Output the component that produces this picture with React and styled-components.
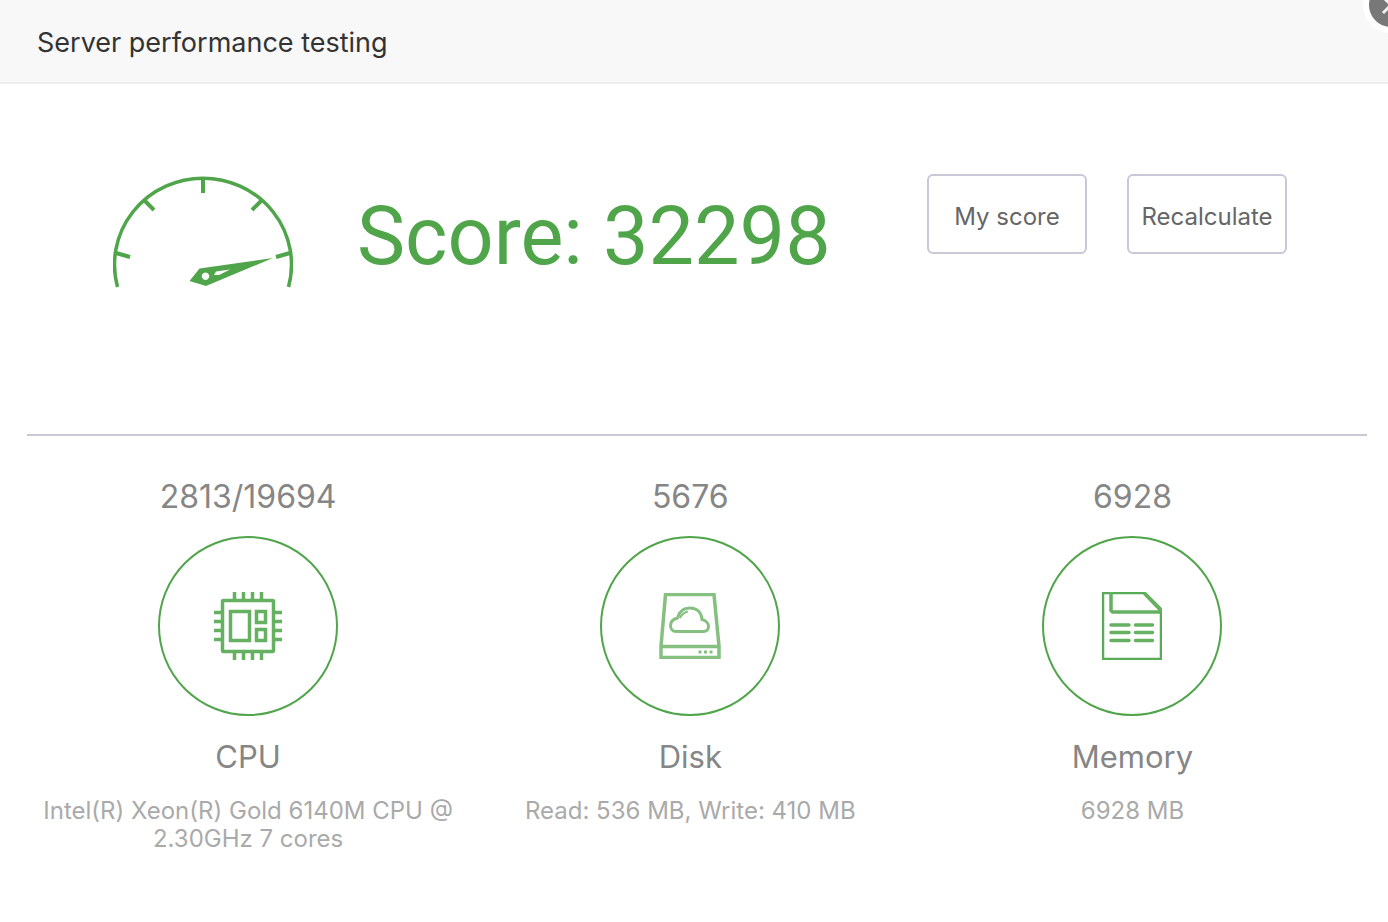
import React from 'react';
import styled, { createGlobalStyle } from 'styled-components';

const GREEN = '#50a54b';
const LINE = '#cac7d9';

const GlobalStyle = createGlobalStyle`
  *, *::before, *::after { box-sizing: border-box; }
  body {
    margin: 0;
    background: #fff;
    font-family: Inter, "Liberation Sans", sans-serif;
  }
`;

const Dialog = styled.section`
  position: relative;
  overflow: hidden;
  min-height: 100vh;
  background: #fff;
`;

const Header = styled.header`
  height: 84px;
  padding: 3px 37px 0;
  display: flex;
  align-items: center;
  background: #f8f8f8;
  border-bottom: 2px solid #eee;
`;

const Title = styled.h1`
  margin: 0;
  font-size: 27px;
  line-height: 36px;
  font-weight: 400;
  color: #333;
`;

const CloseButton = styled.button`
  position: absolute;
  top: -23px;
  right: -31px;
  width: 56px;
  height: 56px;
  padding: 0;
  border: 6px solid #fff;
  border-radius: 50%;
  background: #787878;
  display: grid;
  place-items: center;
  cursor: pointer;
`;

const Summary = styled.div`
  display: flex;
  align-items: flex-start;
  margin: 0 21px 0 27px;
  height: 352px;
  padding: 90px 80px 0 86px;
  border-bottom: 2px solid ${LINE};
`;

const Gauge = styled.svg`
  flex: none;
  width: 180px;
  height: 114px;
`;

const Score = styled.p`
  flex: 1;
  margin: 15px 0 0 64px;
  font-family: Roboto, "Liberation Sans", sans-serif;
  font-size: 81px;
  line-height: 96px;
  color: ${GREEN};
  white-space: nowrap;
`;

const Actions = styled.div`
  display: flex;
  gap: 40px;
`;

const ActionButton = styled.button`
  width: 160px;
  height: 80px;
  padding: 6px 0 0;
  border: 2px solid ${LINE};
  border-radius: 6px;
  background: #fff;
  color: #666;
  font-family: inherit;
  font-size: 24px;
  line-height: 28px;
  cursor: pointer;
`;

const Results = styled.div`
  display: flex;
  margin: 0 21px 0 27px;
  padding-top: 41px;
`;

const Result = styled.article`
  width: 33%;
  padding: 0 12px;
  display: flex;
  flex-direction: column;
  align-items: center;
  text-align: center;
`;

const Value = styled.p`
  margin: 0;
  font-size: 32px;
  line-height: 40px;
  color: #868686;
`;

const IconRing = styled.div`
  width: 180px;
  height: 180px;
  margin: 19px 0 21px;
  border: 2px solid ${GREEN};
  border-radius: 50%;
  display: grid;
  place-items: center;
`;

const Name = styled.h2`
  margin: 0 0 20px;
  font-size: 31px;
  line-height: 40px;
  font-weight: 400;
  color: #868686;
`;

const Detail = styled.p`
  margin: 0;
  font-size: 24px;
  line-height: 28px;
  color: #aaa;
`;

const CpuIcon = () => (
  <svg width="68" height="68" viewBox="0 0 68 68" fill="none" stroke="#66b161" strokeWidth="3.5" aria-hidden="true">
    <rect x="8.5" y="8.5" width="51" height="51" rx="1" />
    <rect x="16.5" y="19.5" width="19" height="29" />
    <rect x="42.5" y="19.5" width="9" height="11" />
    <rect x="42.5" y="37.5" width="9" height="11" />
    <path d="M20.5 0v8M29.5 0v8M38.5 0v8M47.5 0v8M20.5 60v8M29.5 60v8M38.5 60v8M47.5 60v8M0 20.5h8M0 29.5h8M0 38.5h8M0 47.5h8M60 20.5h8M60 29.5h8M60 38.5h8M60 47.5h8" />
  </svg>
);

const DiskIcon = () => (
  <svg width="62" height="66" viewBox="0 0 62 66" fill="none" stroke="#85c081" strokeWidth="3.5" aria-hidden="true">
    <path d="M6.5 1.5h48.500L60 53v11.500h-58V53z" />
    <path d="M2 53.500h58" />
    <path d="M17 38.500c-3.500 0-5.500-2.500-5.500-6 0-4 3-6.500 7-7.500 1.500-6 6-10 12.500-10 7 0 11.500 4.500 12 11.500 4 1 6.500 4 6.500 7 0 3-2 5-5 5z" strokeWidth="3" />
    <path d="M21 25c1.500-3.500 4-5.500 8-6.500" strokeWidth="2" />
    <path d="M39.500 59h3M45 59h3M50.500 59h3" strokeWidth="3" />
  </svg>
);

const MemoryIcon = () => (
  <svg width="60" height="68" viewBox="0 0 60 68" fill="none" stroke="#5aab55" strokeWidth="2.5" aria-hidden="true">
    <path d="M1 1h42L59 17v50H1z" />
    <g stroke="#66b161" strokeWidth="3.5" strokeLinecap="round" strokeLinejoin="round">
      <path d="M9 1.500v17l1.500 1.500H58M43 2l15.500 16" />
      <path d="M9 33h18M33.500 33h17M9 40.500h18M33.500 40.500h17M9 48.500h18M33.500 48.500h17" />
    </g>
  </svg>
);

const results = [
  { name: 'CPU', value: '2813/19694', detail: 'Intel(R) Xeon(R) Gold 6140M CPU @ 2.30GHz 7 cores', Icon: CpuIcon },
  { name: 'Disk', value: '5676', detail: 'Read: 536 MB, Write: 410 MB', Icon: DiskIcon },
  { name: 'Memory', value: '6928', detail: '6928 MB', Icon: MemoryIcon },
];

export default function App() {
  return (
    <>
      <GlobalStyle />
      <Dialog aria-labelledby="dialog-title">
        <Header>
          <Title id="dialog-title">Server performance testing</Title>
        </Header>
        <CloseButton type="button" aria-label="Close">
          <svg width="20" height="20" viewBox="0 0 20 20" stroke="#f0f0f0" strokeWidth="3" aria-hidden="true">
            <path d="M2 2l16 16M18 2L2 18" />
          </svg>
        </CloseButton>

        <Summary>
          <Gauge viewBox="0 0 180 114" fill="none" stroke={GREEN} aria-hidden="true">
            <path d="M4.500 113A88.500 86.500 0 1 1 175.500 113" strokeWidth="3.500" />
            <path d="M90 4v15M31 26l10 10M149 26l-10 10M3 79l14 4M177 79l-14 4" strokeWidth="4" />
            <path
              d="M160 84L86.500 94.500 76.500 107 93 112zM92.500 98.500a3.700 3.700 0 1 0 .01 0zM101 101l2-3.500 14-2-11 5.500z"
              fill={GREEN}
              fillRule="evenodd"
              stroke="none"
            />
          </Gauge>
          <Score>Score: 32298</Score>
          <Actions>
            <ActionButton type="button">My score</ActionButton>
            <ActionButton type="button">Recalculate</ActionButton>
          </Actions>
        </Summary>

        <Results>
          {results.map(({ name, value, detail, Icon }) => (
            <Result key={name}>
              <Value>{value}</Value>
              <IconRing>
                <Icon />
              </IconRing>
              <Name>{name}</Name>
              <Detail>{detail}</Detail>
            </Result>
          ))}
        </Results>
      </Dialog>
    </>
  );
}
